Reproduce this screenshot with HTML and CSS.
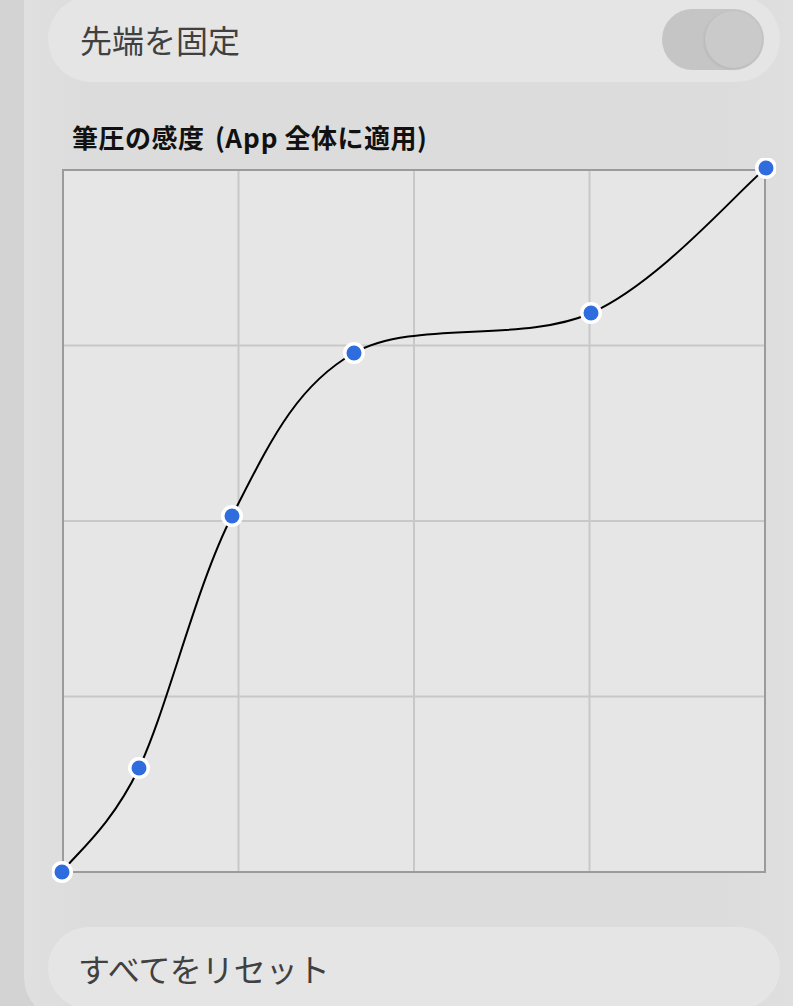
FILE: index.html
```html
<!DOCTYPE html>
<html lang="ja">
<head>
<meta charset="utf-8">
<title>筆圧の感度</title>
<link rel="stylesheet" href="styles.css">
</head>
<body>
<div class="panel">
  <div class="row row-top">
    <span class="row-label">先端を固定</span>
    <div class="toggle"><div class="knob"></div></div>
  </div>
  <div class="title">筆圧の感度 <span class="paren">(<span class="latin">App</span>全体に適用)</span></div>
  <svg class="chart" width="724" height="726" viewBox="52 158 724 726" xmlns="http://www.w3.org/2000/svg">
    <rect x="63" y="170" width="702" height="702" fill="#e6e6e6"/>
    <g stroke="#c8c8c8" stroke-width="2">
      <line x1="238.5" y1="170" x2="238.5" y2="872"/>
      <line x1="414" y1="170" x2="414" y2="872"/>
      <line x1="589.5" y1="170" x2="589.5" y2="872"/>
      <line x1="63" y1="345.5" x2="765" y2="345.5"/>
      <line x1="63" y1="521" x2="765" y2="521"/>
      <line x1="63" y1="696.5" x2="765" y2="696.5"/>
    </g>
    <rect x="63" y="170" width="702" height="702" fill="none" stroke="#9b9b9b" stroke-width="2"/>
    <path d="M62,872 C74.8,854.7 110.7,827.3 139,768 C167.3,708.7 196.2,585.2 232,516 C267.8,446.8 294.2,386.8 354,353 C413.8,319.2 522.3,343.8 591,313 C659.7,282.2 736.8,192.2 766,168" fill="none" stroke="#000" stroke-width="2"/>
    <g fill="#ffffff">
      <circle cx="62" cy="872" r="11"/>
      <circle cx="139" cy="768" r="11"/>
      <circle cx="232" cy="516" r="11"/>
      <circle cx="354" cy="353" r="11"/>
      <circle cx="591" cy="313" r="11"/>
      <circle cx="766" cy="168" r="11"/>
    </g>
    <g fill="#2f6ddf">
      <circle cx="62" cy="872" r="7.5"/>
      <circle cx="139" cy="768" r="7.5"/>
      <circle cx="232" cy="516" r="7.5"/>
      <circle cx="354" cy="353" r="7.5"/>
      <circle cx="591" cy="313" r="7.5"/>
      <circle cx="766" cy="168" r="7.5"/>
    </g>
  </svg>
  <div class="row row-bottom">
    <span class="row-label">すべてをリセット</span>
  </div>
</div>
</body>
</html>
```
FILE: styles.css
```css
html, body {
  margin: 0;
  padding: 0;
}
body {
  background: #d3d3d3;
  height: 1006px;
  overflow: hidden;
  font-family: "Noto Sans CJK JP", "Noto Sans", sans-serif;
}
.panel {
  margin-left: 24px;
  height: 1021px;
  box-sizing: border-box;
  background: linear-gradient(90deg, #e0e0e0 0px, #dcdcdc 60px, #dcdcdc 700px, #dfdfdf 100%);
  border-bottom-left-radius: 44px;
  padding: 0 13px 0 24px;
  display: flex;
  flex-direction: column;
}
.row {
  background: #e5e5e5;
  display: flex;
  align-items: center;
  box-sizing: border-box;
  flex-shrink: 0;
}
.row-top {
  margin-top: -4px;
  height: 86px;
  border-radius: 43px;
  justify-content: space-between;
  padding: 0 16px 0 32px;
}
.row-label {
  font-size: 32px;
  color: #404040;
  line-height: 40px;
}
.toggle {
  width: 102px;
  height: 61px;
  border-radius: 31px;
  background: #c5c5c5;
  display: flex;
  align-items: center;
  justify-content: flex-end;
  padding-right: 2px;
  box-sizing: border-box;
}
.knob {
  width: 57px;
  height: 57px;
  border-radius: 50%;
  background: #cacaca;
  box-shadow: -1px 1px 3px rgba(0, 0, 0, 0.08);
}
.title {
  margin: 40px 0 0 24px;
  font-size: 26px;
  font-weight: 700;
  line-height: 30px;
  color: #111111;
  letter-spacing: 0.5px;
}
.paren {
  margin-left: 4px;
}
.latin {
  margin-right: 6px;
  letter-spacing: 1px;
}
.chart {
  display: block;
  margin: 6px 0 0 4px;
  flex-shrink: 0;
}
.row-bottom {
  margin-top: 43px;
  height: 82px;
  border-radius: 41px;
  padding-left: 30px;
}
```
